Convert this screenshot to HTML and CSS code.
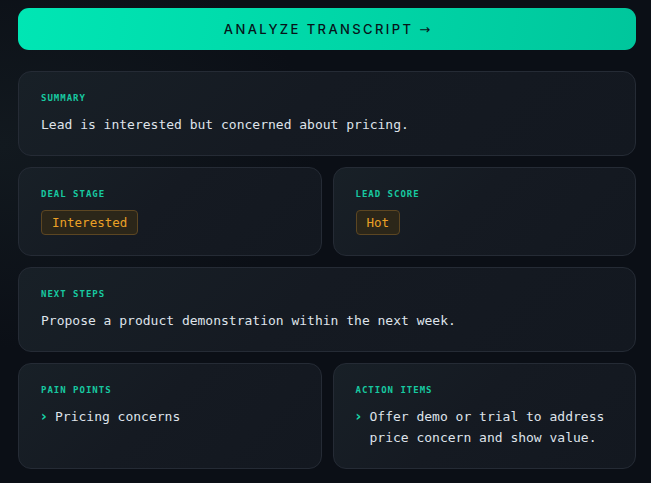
FILE: index.html
```html
<!DOCTYPE html>
<html lang="en">
<head>
<meta charset="utf-8">
<title>Analyze Transcript</title>
<link rel="stylesheet" href="styles.css">
</head>
<body>
<main class="wrap">
  <button class="analyze">ANALYZE TRANSCRIPT <span class="arrow">→</span></button>

  <section class="card">
    <div class="label">SUMMARY</div>
    <p class="text">Lead is interested but concerned about pricing.</p>
  </section>

  <div class="row">
    <section class="card">
      <div class="label">DEAL STAGE</div>
      <span class="badge">Interested</span>
    </section>
    <section class="card">
      <div class="label">LEAD SCORE</div>
      <span class="badge">Hot</span>
    </section>
  </div>

  <section class="card">
    <div class="label">NEXT STEPS</div>
    <p class="text">Propose a product demonstration within the next week.</p>
  </section>

  <div class="row">
    <section class="card">
      <div class="label">PAIN POINTS</div>
      <ul class="list">
        <li><span class="chev">›</span><span>Pricing concerns</span></li>
      </ul>
    </section>
    <section class="card">
      <div class="label">ACTION ITEMS</div>
      <ul class="list">
        <li><span class="chev">›</span><span>Offer demo or trial to address price concern and show value.</span></li>
      </ul>
    </section>
  </div>
</main>
</body>
</html>
```

FILE: styles.css
```css
* { box-sizing: border-box; }
html, body { height: 100%; }
body {
  margin: 0;
  background: radial-gradient(ellipse 70% 60% at 0% 30%, #12191f 0%, #0b0f16 70%), #0a0d15;
  background-color: #0a0d15;
  font-family: "DejaVu Sans Mono", "Liberation Mono", monospace;
  color: #dde1e8;
}
.wrap {
  width: 618px;
  margin-left: 18px;
  padding-top: 8px;
  display: flex;
  flex-direction: column;
  gap: 11px;
}
.analyze {
  height: 42px;
  border: none;
  border-radius: 11px;
  background: linear-gradient(100deg, #00e6b4 0%, #00d7a8 50%, #00c69c 100%);
  color: #07141a;
  font-family: Inter, "Liberation Sans", sans-serif;
  font-size: 13px;
  font-weight: 500;
  letter-spacing: 2.4px;
  margin-bottom: 10px;
  cursor: pointer;
}
.arrow {
  font-family: "DejaVu Sans", sans-serif;
  font-weight: 400;
  letter-spacing: 0;
}
.row {
  display: grid;
  grid-template-columns: 1fr 1fr;
  gap: 11px;
}
.card {
  border: 1px solid #252b35;
  border-radius: 13px;
  background: linear-gradient(135deg, #182027 0%, #151a22 45%, #131820 100%);
  padding: 20px 22px;
}
.label {
  font-size: 9px;
  line-height: 12px;
  font-weight: bold;
  letter-spacing: 1px;
  color: #17c9a0;
  margin-bottom: 10px;
}
.text {
  margin: 0;
  font-size: 13px;
  line-height: 21px;
  color: #dfe3ea;
}
.badge {
  display: inline-block;
  font-size: 12.5px;
  line-height: 17px;
  padding: 3px 10px;
  border: 1px solid #5c4622;
  border-radius: 4px;
  background: #2b2619;
  color: #eba126;
}
.list {
  margin: 0;
  padding: 0;
  list-style: none;
  font-size: 13px;
  line-height: 21px;
  color: #dfe3ea;
}
.list li { display: flex; }
.chev {
  color: #17d3a6;
  font-family: "DejaVu Sans", sans-serif;
  font-weight: bold;
  font-size: 14px;
  width: 14px;
  flex: none;
}
```
